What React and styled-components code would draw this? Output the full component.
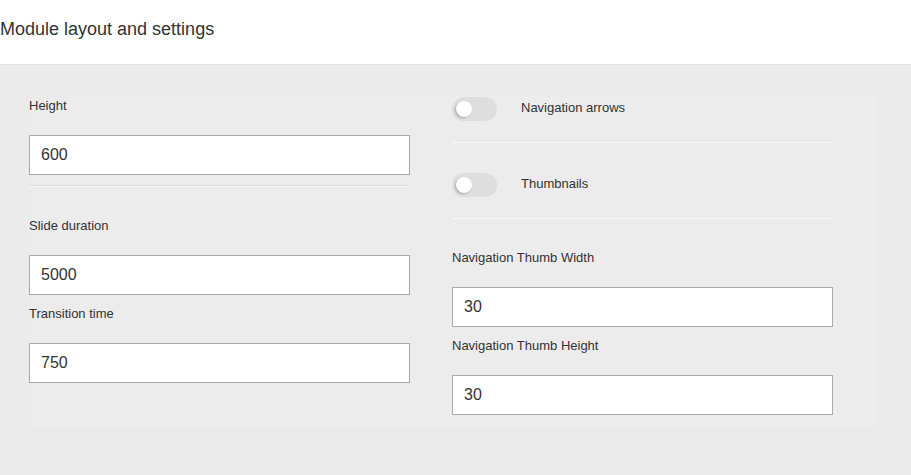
import styled, { createGlobalStyle } from "styled-components";

const GlobalStyle = createGlobalStyle`
    html, body {
        margin: 0;
        padding: 0;
        background: #ebebeb;
        font-family: "Liberation Sans", Arial, sans-serif;
        color: #333;
    }
`;

const App = () => {
    return (
        <>
            <GlobalStyle />
            <Page>
                <Header>
                    <Title>Module layout and settings</Title>
                </Header>
                <Body>
                    <Panel>
                        <Column>
                            <Field>
                                <Label>Height</Label>
                                <Input defaultValue="600" />
                            </Field>
                            <Divider $shade />
                            <Field $top={30}>
                                <Label>Slide duration</Label>
                                <Input defaultValue="5000" />
                            </Field>
                            <Field $top={10}>
                                <Label>Transition time</Label>
                                <Input defaultValue="750" />
                            </Field>
                        </Column>
                        <Column>
                            <ToggleRow>
                                <Switch />
                                <ToggleLabel>Navigation arrows</ToggleLabel>
                            </ToggleRow>
                            <Divider />
                            <ToggleRow $top={30}>
                                <Switch />
                                <ToggleLabel>Thumbnails</ToggleLabel>
                            </ToggleRow>
                            <Divider />
                            <Field $top={30}>
                                <Label>Navigation Thumb Width</Label>
                                <Input defaultValue="30" />
                            </Field>
                            <Field $top={10}>
                                <Label>Navigation Thumb Height</Label>
                                <Input defaultValue="30" />
                            </Field>
                        </Column>
                    </Panel>
                </Body>
            </Page>
        </>
    );
};

const Page = styled.div`
    min-height: 100vh;
    background: #ebebeb;
`;

const Header = styled.div`
    height: 64px;
    background: #fff;
    border-bottom: 1px solid #e3e3e3;
    display: flex;
    align-items: center;
`;

const Title = styled.h1`
    margin: 0 0 6px;
    font-size: 18px;
    font-weight: 400;
    color: #333;
`;

const Body = styled.div`
    padding: 30px 31px 30px 29px;
`;

const Panel = styled.div`
    width: 846px;
    display: grid;
    grid-template-columns: 1fr 1fr;
    background: #ececec;
    border-top: 1px solid #efefef;
    border-right: 1px solid #efefef;
    border-bottom: 1px solid #efefef;
    padding: 1px 0 10px;
`;

const Column = styled.div`
    display: flex;
    flex-direction: column;
`;

const Field = styled.div`
    display: flex;
    flex-direction: column;
    margin-top: ${(p) => p.$top || 0}px;
`;

const Label = styled.label`
    font-size: 13px;
    line-height: 18px;
    color: #333;
    margin-bottom: 20px;
`;

const Input = styled.input`
    box-sizing: border-box;
    width: 90%;
    height: 40px;
    padding: 0 11px;
    border: 1px solid #aaa;
    background: #fff;
    font-family: "Liberation Sans", Arial, sans-serif;
    font-size: 16px;
    color: #333;
    outline: none;
`;

const Divider = styled.div`
    width: 90%;
    margin-top: ${(p) => (p.$shade ? 10 : 21)}px;
    height: ${(p) => (p.$shade ? 2 : 1)}px;
    box-sizing: border-box;
    border-top: 1px solid ${(p) => (p.$shade ? "#dcdcdc" : "#f8f8f8")};
    ${(p) => p.$shade && "border-bottom: 1px solid #fafafa;"}
`;

const ToggleRow = styled.div`
    display: flex;
    align-items: center;
    gap: 24px;
    margin-top: ${(p) => p.$top || 0}px;
`;

const Switch = styled.span`
    position: relative;
    width: 45px;
    height: 24px;
    border-radius: 12px;
    background: #dedede;
    flex-shrink: 0;

    &::after {
        content: "";
        position: absolute;
        left: 4px;
        top: 4px;
        width: 16px;
        height: 16px;
        border-radius: 50%;
        background: #fff;
        box-shadow: -1px 1px 2px rgba(0, 0, 0, 0.25);
    }
`;

const ToggleLabel = styled.span`
    font-size: 13px;
    line-height: 18px;
    color: #333;
    margin-top: -3px;
`;

export default App;
